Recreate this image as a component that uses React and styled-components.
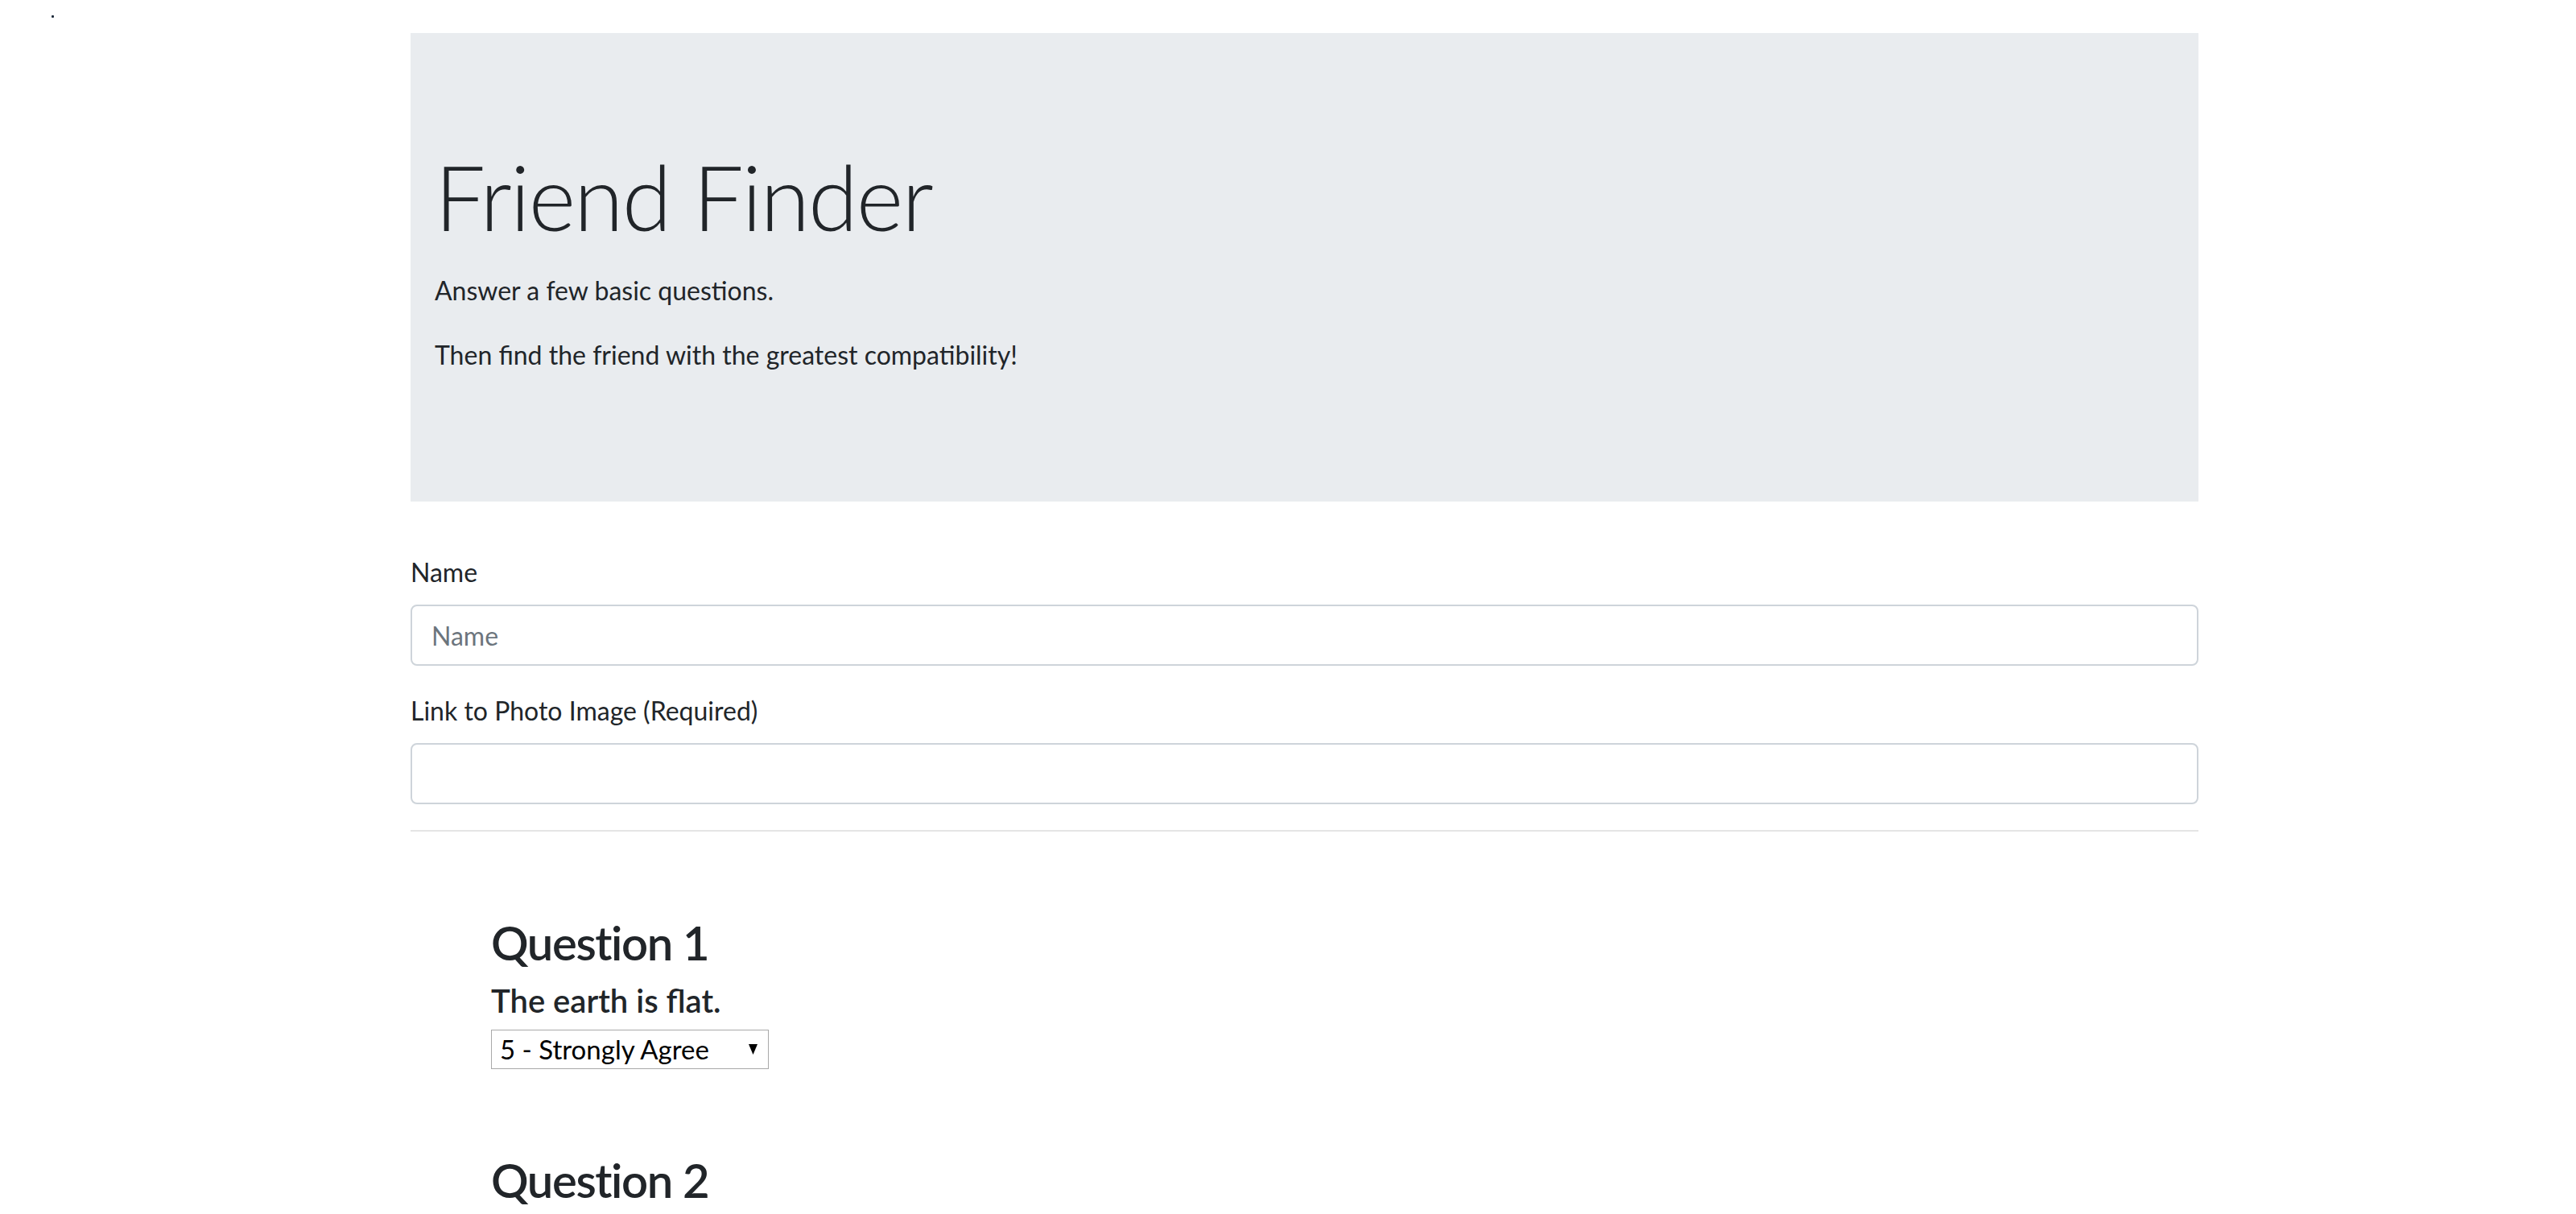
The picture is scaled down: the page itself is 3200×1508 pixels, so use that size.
import React from "react";
import styled, { createGlobalStyle } from "styled-components";

const Global = createGlobalStyle`
  *, *::before, *::after { box-sizing: border-box; }
  html, body { margin: 0; padding: 0; background: #fff; }
  body {
    font-family: Lato, "Open Sans", sans-serif;
    font-size: 32px;
    line-height: 1.5;
    color: #212529;
  }
`;

const TopStrip = styled.div`
  height: 41px;
  padding: 19px 0 0 64px;
`;

const Speck = styled.span`
  display: block;
  width: 3px;
  height: 3px;
  border-radius: 1px;
  background: #1d2a3a;
`;

const Container = styled.main`
  width: 2221px;
  margin-left: 510px;
  padding-bottom: 200px;
`;

const Jumbotron = styled.header`
  background: #e9ecef;
  padding: 136px 30px 136px;
  margin-bottom: 64px;
`;

const Display = styled.h1`
  margin: 0 0 26px;
  font-size: 112px;
  font-weight: 300;
  line-height: 1.2;
  letter-spacing: -2px;
`;

const Lead = styled.p`
  margin: 0 0 32px;
  &:last-child { margin-bottom: 22px; }
`;

const FormGroup = styled.div`
  margin-bottom: 32px;
`;

const Label = styled.label`
  display: inline-block;
  margin-bottom: 16px;
`;

const Input = styled.input`
  display: block;
  width: 100%;
  height: 76px;
  padding: 12px 24px;
  font-family: inherit;
  font-size: 32px;
  line-height: 1.5;
  color: #495057;
  background: #fff;
  border: 2px solid #ced4da;
  border-radius: 8px;
  outline: none;
  &::placeholder { color: #6c757d; opacity: 1; }
`;

const Divider = styled.hr`
  margin: 32px 0;
  border: 0;
  border-top: 2px solid rgba(0, 0, 0, 0.1);
`;

const Question = styled.section`
  margin: 100px;
`;

const QTitle = styled.h2`
  margin: 0 0 10px;
  font-size: 58px;
  font-weight: 600;
  line-height: 1.3;
  letter-spacing: -1.4px;
`;

const QText = styled.h5`
  margin: 0 0 12px;
  font-size: 40px;
  font-weight: 600;
  line-height: 1.2;
`;

const SelectWrap = styled.div`
  position: relative;
  width: 345px;
  height: 49px;
`;

const Select = styled.select`
  appearance: none;
  -webkit-appearance: none;
  width: 100%;
  height: 100%;
  padding: 0 0 0 10px;
  font-family: inherit;
  font-size: 33px;
  color: #000;
  background: #fff;
  border: 1px solid #a9a9a9;
  border-radius: 0;
  outline: none;
`;

const Caret = styled.svg`
  position: absolute;
  right: 14px;
  top: 18px;
  pointer-events: none;
`;

const options = [
  "1 - Strongly Disagree",
  "2 - Disagree",
  "3 - Neutral",
  "4 - Agree",
  "5 - Strongly Agree",
];

function Rating() {
  return (
    <SelectWrap>
      <Select defaultValue="5 - Strongly Agree">
        {options.map((o) => (
          <option key={o} value={o}>{o}</option>
        ))}
      </Select>
      <Caret width="11" height="13" viewBox="0 0 11 13">
        <polygon points="0,0 11,0 5.5,13" fill="#000" />
      </Caret>
    </SelectWrap>
  );
}

export default function App() {
  return (
    <>
      <Global />
      <TopStrip><Speck /></TopStrip>
      <Container>
        <Jumbotron>
          <Display>Friend Finder</Display>
          <Lead>Answer a few basic questions.</Lead>
          <Lead>Then find the friend with the greatest compatibility!</Lead>
        </Jumbotron>
        <form>
          <FormGroup>
            <Label htmlFor="name">Name</Label>
            <Input id="name" type="text" placeholder="Name" />
          </FormGroup>
          <FormGroup>
            <Label htmlFor="photo">Link to Photo Image (Required)</Label>
            <Input id="photo" type="text" />
          </FormGroup>
          <Divider />
          <Question>
            <QTitle>Question 1</QTitle>
            <QText>The earth is flat.</QText>
            <Rating />
          </Question>
          <Question>
            <QTitle>Question 2</QTitle>
          </Question>
        </form>
      </Container>
    </>
  );
}
